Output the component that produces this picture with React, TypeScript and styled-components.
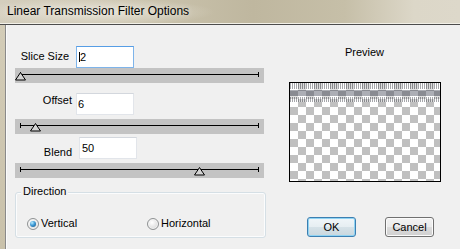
import React from "react";
import styled, { createGlobalStyle } from "styled-components";

const Global = createGlobalStyle`
  html, body { margin: 0; padding: 0; background: #f0f0f0; }
  body { font-family: "Liberation Sans", Arial, sans-serif; font-size: 11px; color: #000; }
  * { box-sizing: border-box; }
`;

const Window = styled.div`
  width: 460px;
  height: 249px;
  overflow: hidden;
  display: flex;
  flex-direction: column;
  background: #cdc6b0;
`;

const TitleBar = styled.div`
  height: 25px;
  flex: none;
  padding: 4px 0 0 7px;
  background:
    radial-gradient(ellipse 120px 14px at 95px 12px, rgba(240, 237, 228, 0.75), rgba(240, 237, 228, 0) 100%),
    linear-gradient(90deg, #d4cebd 0%, #cbc4ae 30%, #bfb79f 55%, #c6bfa8 75%, #dcd7c8 90%, #ddd8ca 100%);
  border-bottom: 1px solid #4c4c4c;
  box-shadow: inset 0 -1px 0 #f2f0e8;
`;

const Title = styled.div`
  font-family: "Liberation Sans", Arial, sans-serif;
  font-size: 12px;
  line-height: 14px;
  color: #000;
  text-shadow: 0 0 6px rgba(255, 255, 255, 0.6);
`;

const Body = styled.div`
  flex: 1;
  display: flex;
  padding-left: 5px;
  background: linear-gradient(180deg, #d3ccb7, #c9c1aa);
`;

const Content = styled.div`
  flex: 1;
  display: flex;
  background: #f0f0f0;
  border-left: 1px solid #8a8a8a;
  box-shadow: inset 1px 0 0 #fbfbfb;
`;

const LeftCol = styled.div`
  width: 263px;
  padding-left: 9px;
  display: flex;
  flex-direction: column;
`;

const RightCol = styled.div`
  flex: 1;
  display: flex;
  flex-direction: column;
  align-items: center;
`;

const FieldRow = styled.div<{ $top: number; $labelW: number; $gap: number }>`
  margin-top: ${(p) => p.$top}px;
  display: grid;
  grid-template-columns: ${(p) => p.$labelW}px 58px;
  column-gap: ${(p) => p.$gap}px;
  align-items: start;
`;

const FieldLabel = styled.div<{ $dy: number }>`
  margin-top: ${(p) => p.$dy}px;
  text-align: right;
  line-height: 13px;
  white-space: nowrap;
`;

const TextBox = styled.div<{ $focused?: boolean; $pad?: number }>`
  height: 22px;
  background: #fff;
  border: 1px solid ${(p) => (p.$focused ? "#7eb4ea" : "#e2e5ea")};
  border-top-color: ${(p) => (p.$focused ? "#569de5" : "#d3d7dd")};
  display: flex;
  align-items: center;
  padding-left: ${(p) => p.$pad ?? 1}px;
  font-size: 11px;
  line-height: 13px;
`;

const Caret = styled.span`
  display: inline-block;
  width: 1px;
  height: 10px;
  margin-left: 1px;
  background: #000;
`;

const Track = styled.div<{ $top: number }>`
  margin-top: ${(p) => p.$top}px;
  width: 249px;
  height: 15px;
  padding: 6px 5px 0 5px;
  background: #c3c3c3;
`;

const Rail = styled.div`
  position: relative;
  height: 1px;
  background: #000;
  &::before,
  &::after {
    content: "";
    position: absolute;
    top: -2px;
    width: 1px;
    height: 5px;
    background: #000;
  }
  &::before { left: 0; }
  &::after { right: 0; }
`;

const Thumb = styled.svg`
  position: absolute;
  top: -2px;
  width: 11px;
  height: 9px;
  overflow: visible;
`;

const Slider: React.FC<{ top: number; frac: number }> = ({ top, frac }) => (
  <Track $top={top}>
    <Rail>
      <Thumb viewBox="0 0 11 9" style={{ left: `calc(${frac * 100}% - 5px)` }}>
        <polygon points="5.5,0.5 0.5,8 10.5,8" fill="#d4d4d4" stroke="#000" strokeWidth="1" />
      </Thumb>
    </Rail>
  </Track>
);

const GroupBox = styled.div`
  position: relative;
  margin-top: 14px;
  width: 251px;
  height: 46px;
  border: 1px solid #d5dfe5;
  border-radius: 3px;
  box-shadow: inset 0 0 0 1px #fbfcfd;
  padding: 17px 0 0 11px;
  display: grid;
  grid-template-columns: 120px auto;
  align-items: center;
`;

const GroupLegend = styled.div`
  position: absolute;
  top: -8px;
  left: 5px;
  padding: 0 2px;
  background: #f0f0f0;
  line-height: 13px;
`;

const RadioOption = styled.label`
  display: flex;
  align-items: center;
  gap: 2px;
  line-height: 13px;
`;

const RadioDot = styled.span<{ $checked?: boolean }>`
  position: relative;
  width: 12px;
  height: 12px;
  border-radius: 50%;
  border: 1px solid #8f9293;
  background: radial-gradient(circle at 40% 35%, #ffffff 0%, #e9e9e9 45%, #cfd0d1 100%);
  box-shadow: inset 0 0 0 1px #f4f4f4;
  &::after {
    content: "";
    display: ${(p) => (p.$checked ? "block" : "none")};
    position: absolute;
    left: 2px;
    top: 2px;
    width: 6px;
    height: 6px;
    border-radius: 50%;
    background: radial-gradient(circle at 35% 30%, #b9ecff 0%, #3d9ad6 45%, #13507f 100%);
  }
`;

const PreviewLabel = styled.div`
  margin-top: 21px;
  line-height: 13px;
  font-size: 11px;
`;

const PreviewBox = styled.div`
  margin-top: 23px;
  width: 152px;
  height: 100px;
  border: 1px solid #000;
  background: #fff;
  display: flex;
`;

const ButtonRow = styled.div`
  margin-top: 35px;
  align-self: flex-start;
  margin-left: 38px;
  display: flex;
  gap: 29px;
`;

const Button = styled.button<{ $default?: boolean }>`
  width: 49px;
  height: 20px;
  padding: 0;
  font-family: "Liberation Sans", Arial, sans-serif;
  font-size: 11px;
  color: #000;
  border-radius: 3px;
  border: 1px solid ${(p) => (p.$default ? "#3c7fb1" : "#707070")};
  box-shadow: inset 0 0 0 1px ${(p) => (p.$default ? "#8fd3f3" : "#fbfbfb")};
  background: ${(p) =>
    p.$default
      ? "linear-gradient(180deg, #f0f6f9 0%, #e6eef2 50%, #d6e2e8 50%, #c9d7de 100%)"
      : "linear-gradient(180deg, #f2f2f2 0%, #ebebeb 50%, #dddddd 50%, #cfcfcf 100%)"};
`;

const PreviewImage: React.FC = () => (
  <svg width="150" height="98" viewBox="0 0 150 98">
    <defs>
      <pattern id="checker" width="16" height="16" patternUnits="userSpaceOnUse">
        <rect width="16" height="16" fill="#ffffff" />
        <rect x="8" y="0" width="8" height="8" fill="#c0c0c0" />
        <rect x="0" y="8" width="8" height="8" fill="#c0c0c0" />
      </pattern>
      <pattern id="ticks" width="2" height="1" patternUnits="userSpaceOnUse">
        <rect x="0" y="0" width="1" height="1" fill="rgba(80,82,90,0.5)" />
        <rect x="1" y="0" width="1" height="1" fill="rgba(255,255,255,0.45)" />
      </pattern>
    </defs>
    <rect width="150" height="98" fill="url(#checker)" />
    <rect x="0" y="0" width="150" height="6" fill="url(#ticks)" />
    <rect x="0" y="6" width="150" height="1" fill="rgba(255,255,255,0.5)" />
    <rect x="0" y="7" width="150" height="6" fill="rgba(70,75,92,0.45)" />
    <rect x="0" y="13" width="150" height="1" fill="rgba(255,255,255,0.5)" />
    <rect x="0" y="14" width="150" height="5" fill="url(#ticks)" />
  </svg>
);

export default function App() {
  return (
    <>
      <Global />
      <Window>
        <TitleBar>
          <Title>Linear Transmission Filter Options</Title>
        </TitleBar>
        <Body>
          <Content>
            <LeftCol>
              <FieldRow $top={21} $labelW={54} $gap={7}>
                <FieldLabel $dy={4}>Slice Size</FieldLabel>
                <TextBox $focused>
                  <Caret />
                  2
                </TextBox>
              </FieldRow>
              <Slider top={0} frac={0} />
              <FieldRow $top={10} $labelW={57} $gap={4}>
                <FieldLabel $dy={1}>Offset</FieldLabel>
                <TextBox $pad={1}>6</TextBox>
              </FieldRow>
              <Slider top={4} frac={0.0615} />
              <FieldRow $top={3} $labelW={57} $gap={7}>
                <FieldLabel $dy={9}>Blend</FieldLabel>
                <TextBox $pad={2}>50</TextBox>
              </FieldRow>
              <Slider top={4} frac={0.749} />
              <GroupBox>
                <GroupLegend>Direction</GroupLegend>
                <RadioOption>
                  <RadioDot $checked />
                  Vertical
                </RadioOption>
                <RadioOption>
                  <RadioDot />
                  Horizontal
                </RadioOption>
              </GroupBox>
            </LeftCol>
            <RightCol>
              <PreviewLabel>Preview</PreviewLabel>
              <PreviewBox>
                <PreviewImage />
              </PreviewBox>
              <ButtonRow>
                <Button $default>OK</Button>
                <Button>Cancel</Button>
              </ButtonRow>
            </RightCol>
          </Content>
        </Body>
      </Window>
    </>
  );
}
